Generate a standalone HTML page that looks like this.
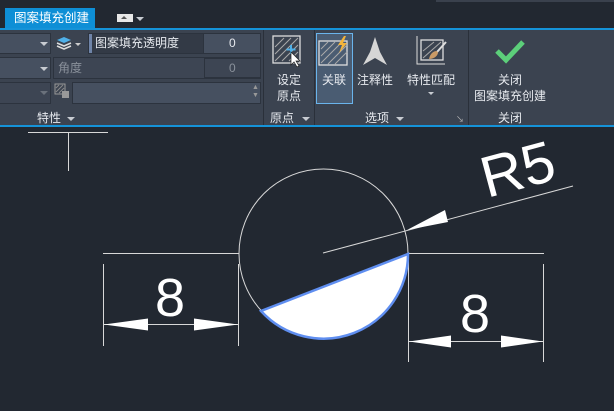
<!DOCTYPE html><html><head><meta charset="utf-8"><style>
body{margin:0;width:614px;height:411px;background:#222831;overflow:hidden;position:relative;font-family:"Liberation Sans","Noto Sans CJK SC",sans-serif;color:#e6e9ee;font-size:12px}
.a{position:absolute}
.f{position:absolute;background:#465060;border:1px solid #2c333e;box-sizing:border-box}
.t{position:absolute;white-space:nowrap;line-height:14px}
.dd{position:absolute;width:0;height:0;border-left:4px solid transparent;border-right:4px solid transparent;border-top:4px solid #c8ccd2}
</style></head><body>
<div class="a" style="left:436px;top:0;width:178px;height:2px;background:#3a414d"></div>
<div class="a" style="left:5px;top:8px;width:90px;height:20px;background:#0e8fd6"></div>
<div class="t" style="left:14px;top:11px;color:#fff;font-size:12.5px">图案填充创建</div>
<div class="a" style="left:117px;top:14px;width:16px;height:8px;background:#e8e8e8"></div>
<div class="dd" style="left:121px;top:16px;border-top:none;border-bottom:3px solid #555;border-left-width:3px;border-right-width:3px"></div>
<div class="dd" style="left:136px;top:17px"></div>
<div class="a" style="left:0;top:28px;width:614px;height:99px;background:#3b4350;border-top:2px solid #1593d8;border-bottom:2px solid #1593d8;box-sizing:border-box"></div>
<div class="a" style="left:263px;top:30px;width:1px;height:95px;background:#2a303a"></div>
<div class="a" style="left:314px;top:30px;width:1px;height:95px;background:#2a303a"></div>
<div class="a" style="left:468px;top:30px;width:1px;height:95px;background:#2a303a"></div>
<!-- row1 -->
<div class="f" style="left:-2px;top:33px;width:53px;height:21px"></div><div class="dd" style="left:40px;top:42px"></div>
<svg class="a" style="left:55px;top:35px" width="28" height="16"><path d="M2 5l7-3 7 3-7 3z" fill="#4fb0e8"/><path d="M2 8l7 3 7-3M2 11l7 3 7-3" stroke="#ddd" fill="none" stroke-width="1.5"/><path d="M20 8h6l-3 3z" fill="#ccc"/></svg>
<div class="f" style="left:88px;top:33px;width:173px;height:21px;background:#333a46"></div>
<div class="a" style="left:89px;top:34px;width:3px;height:19px;background:#6f84a8"></div>
<div class="t" style="left:95px;top:36px">图案填充透明度</div>
<div class="f" style="left:203px;top:33px;width:58px;height:21px"></div><div class="t" style="left:229px;top:36px">0</div>
<!-- row2 -->
<div class="f" style="left:-2px;top:57px;width:53px;height:22px"></div><div class="dd" style="left:40px;top:67px"></div>
<div class="f" style="left:53px;top:57px;width:208px;height:22px;background:#3d4553"></div>
<div class="t" style="left:58px;top:61px;color:#8a919b">角度</div>
<div class="f" style="left:204px;top:58px;width:57px;height:20px;background:#3d4553"></div><div class="t" style="left:229px;top:61px;color:#8a919b">0</div>
<!-- row3 -->
<div class="f" style="left:-2px;top:82px;width:53px;height:22px;background:#3d4553"></div><div class="dd" style="left:40px;top:91px;border-top-color:#6a717b"></div>
<svg class="a" style="left:54px;top:83px" width="16" height="16"><rect x="1" y="1" width="10" height="10" fill="none" stroke="#999"/><path d="M2 9l7-7M2 5l3-3M5 10l5-5" stroke="#888"/><rect x="8" y="8" width="7" height="7" fill="#999"/></svg>
<div class="f" style="left:72px;top:82px;width:189px;height:22px"></div>
<div class="t" style="left:252px;top:84px;font-size:7px;color:#999;line-height:8px">▲<br>▼</div>
<div class="t" style="left:37px;top:111px">特性</div><div class="dd" style="left:67px;top:117px"></div>
<!-- origin -->
<svg class="a" style="left:272px;top:35px" width="34" height="32"><rect x="1" y="1" width="27" height="27" fill="none" stroke="#ddd" stroke-width="1.3"/><path d="M3 26L26 3M3 19L19 3M3 12L12 3M10 26L26 10M17 26L26 17" stroke="#aaa" stroke-width="1"/><path d="M19 10v9M14.5 14.5h9" stroke="#4fb0e8" stroke-width="2"/><path d="M19 17v13l3-3 3 5 2-1-3-5h4z" fill="#fff" stroke="#222" stroke-width=".7"/></svg>
<div class="t" style="left:277px;top:73px">设定</div><div class="t" style="left:277px;top:89px">原点</div>
<div class="t" style="left:270px;top:111px">原点</div><div class="dd" style="left:302px;top:117px"></div>
<!-- options -->
<div class="a" style="left:316px;top:33px;width:37px;height:71px;background:#4a5c72;border:1px solid #6ab4ec;box-sizing:border-box"></div>
<svg class="a" style="left:318px;top:35px" width="34" height="32"><rect x="1" y="6" width="28" height="24" fill="none" stroke="#ddd" stroke-width="1.3"/><path d="M3 28L24 7M3 21L17 7M3 14L10 7M10 29L29 10M17 29L29 17" stroke="#aaa"/><path d="M26 1l-6 9h4l-3 8 8-10h-4l3-7z" fill="#f3b43c"/></svg>
<div class="t" style="left:322px;top:73px">关联</div>
<svg class="a" style="left:360px;top:36px" width="30" height="32"><path d="M15 1L20 16 27 29 15 22 3 29 10 16z" fill="#d6d6d6"/></svg>
<div class="t" style="left:357px;top:73px">注释性</div>
<svg class="a" style="left:414px;top:34px" width="36" height="32"><path d="M3 2v28h28" fill="none" stroke="#ddd"/><rect x="7" y="6" width="22" height="20" fill="none" stroke="#ddd" stroke-width="1.3"/><path d="M9 24L27 8M9 17L20 8" stroke="#aaa"/><path d="M32 8l-9 10" stroke="#ddd" stroke-width="2"/><path d="M23 17c-4 0-7 3-8 8 4 0 8-2 9-6z" fill="#c99a66"/></svg>
<div class="t" style="left:407px;top:73px">特性匹配</div><div class="dd" style="left:428px;top:92px;border-left-width:3px;border-right-width:3px;border-top-width:3px"></div>
<div class="t" style="left:365px;top:111px">选项</div><div class="dd" style="left:396px;top:117px"></div>
<div class="t" style="left:456px;top:113px;font-size:8px;color:#bbb">↘</div>
<!-- close -->
<svg class="a" style="left:493px;top:38px" width="36" height="26"><path d="M4 13l9 9L30 4" fill="none" stroke="#5ccf7a" stroke-width="5"/></svg>
<div class="t" style="left:498px;top:73px">关闭</div><div class="t" style="left:474px;top:89px">图案填充创建</div>
<div class="t" style="left:498px;top:111px">关闭</div>
<!-- canvas -->
<svg class="a" style="left:0;top:127px" width="614" height="284"><g transform="translate(0,-127)" stroke="#d8d8d8" stroke-width="1" fill="none">
<path d="M28 132.5H108M68.5 132V171"/>
<circle cx="323.5" cy="253.5" r="84.5"/>
<path d="M103 253.5H239M103.5 264V346M238.5 264V346M103 324.5H239"/>
<path d="M408 253.5H544M408.5 254V362M543.5 264V362M408 341.5H544"/>
<path d="M323 253L573 186"/>
<g fill="#fff" stroke="none"><path d="M104 324.5l44-6v12z"/><path d="M238 324.5l-44-6v12z"/><path d="M409 341.5l42-6v12z"/><path d="M543 341.5l-42-6v12z"/><path d="M407 230l38-20 3 12z"/></g>
<path d="M408 254 A84.5 84.5 0 0 1 261 311 Z" fill="#fff" stroke="#5f8ef0" stroke-width="2.5"/>
</g>
<g fill="#fff" font-family="Liberation Sans,sans-serif" font-size="54"><text x="170" y="189" text-anchor="middle">8</text><text x="475" y="205" text-anchor="middle">8</text>
<text x="0" y="0" font-size="58" transform="translate(487,71) rotate(-15)">R5</text></g></svg>
</body></html>
